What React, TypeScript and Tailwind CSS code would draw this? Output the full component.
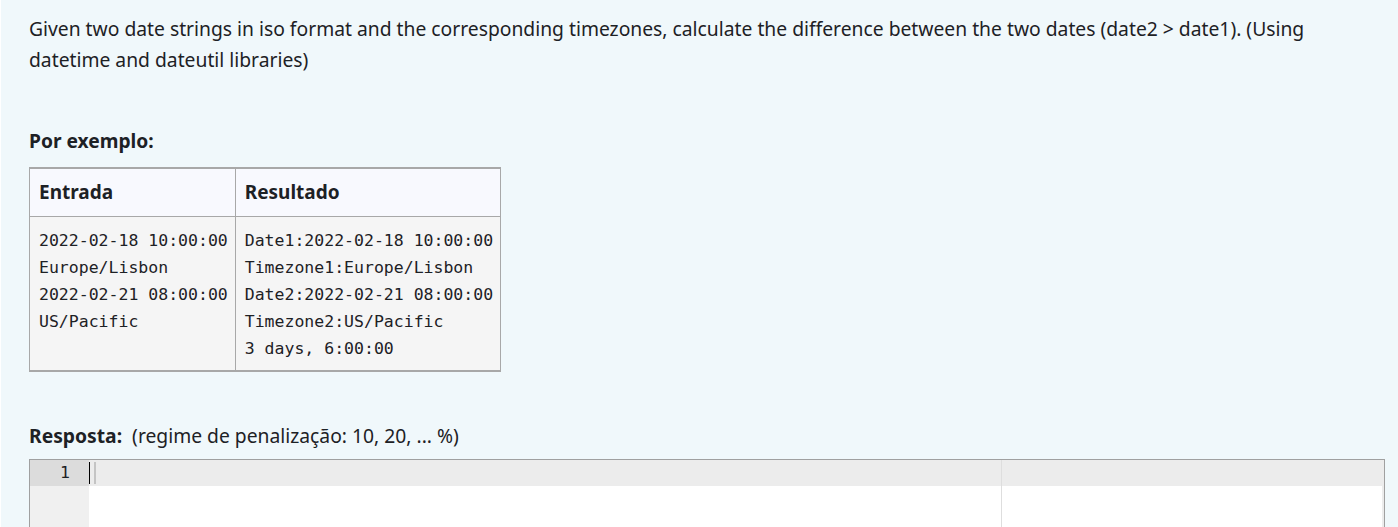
import React from "react";

const inputLines = [
    "2022-02-18 10:00:00",
    "Europe/Lisbon",
    "2022-02-21 08:00:00",
    "US/Pacific",
];

const resultLines = [
    "Date1:2022-02-18 10:00:00",
    "Timezone1:Europe/Lisbon",
    "Date2:2022-02-21 08:00:00",
    "Timezone2:US/Pacific",
    "3 days, 6:00:00",
];

const sans = "font-['Segoe_UI','Noto_Sans',sans-serif]";
const mono = "font-['DejaVu_Sans_Mono',monospace]";

const CodeCell: React.FC<{ lines: string[]; className?: string }> = ({ lines, className = "" }) => (
    <td className={`align-top pl-[9px] pr-[7px] pt-[10px] pb-[8px] ${className}`}>
        {lines.map((line) => (
            <div key={line} className={`${mono} text-[16.5px] leading-[27px] whitespace-pre`}>
                {line}
            </div>
        ))}
    </td>
);

export default function App() {
    return (
        <div className={`w-[1398px] h-[527px] overflow-hidden bg-[#f0f8fb] border-l border-white text-[#1d2125] ${sans}`}>
            <div className="pl-[28px] pr-[14px]">
                {/* Question text */}
                <p className="pt-[13px] text-[19.3px] leading-[31px] w-[1340px]">
                    Given two date strings in iso format and the corresponding timezones, calculate the difference between the two dates (date2 &gt; date1). (Using
                    <br />
                    datetime and dateutil libraries)
                </p>

                {/* Example table */}
                <h4 className="mt-[52px] font-bold text-[19.2px] leading-[27px]">Por exemplo:</h4>
                <table className="mt-[13px] border-collapse border-t-2 border-b-2 border-x border-[#a8a8a8]">
                    <thead>
                        <tr className="bg-[#f8f9fe]">
                            <th className="h-[48px] text-left font-bold text-[19px] pl-[9px] pr-[7px] border-r border-b border-[#a8a8a8]">
                                Entrada
                            </th>
                            <th className="text-left font-bold text-[19px] pl-[9px] pr-[7px] border-b border-[#a8a8a8]">
                                Resultado
                            </th>
                        </tr>
                    </thead>
                    <tbody>
                        <tr className="bg-[#f5f5f5]">
                            <CodeCell lines={inputLines} className="border-r border-[#a8a8a8]" />
                            <CodeCell lines={resultLines} />
                        </tr>
                    </tbody>
                </table>

                {/* Answer */}
                <div className="mt-[50px] flex items-baseline gap-[10px] text-[19.3px] leading-[27px]">
                    <span className="font-bold">Resposta:</span>
                    <span>(regime de penalização: 10, 20, ... %)</span>
                </div>

                <div className="mt-[10px] w-[1356px] h-[120px] border border-[#a0a0a0] flex bg-white">
                    {/* Gutter */}
                    <div className="w-[59px] bg-[#f0f0f0] flex flex-col">
                        <div className={`h-[26px] bg-[#dcdcdc] text-right pr-[19px] ${mono} text-[16.5px] leading-[26px]`}>1</div>
                    </div>
                    {/* Content */}
                    <div className="relative flex-1">
                        <div className="h-[26px] bg-[#ececec]" />
                        <div className="absolute left-0 top-[2px] w-px h-[22px] bg-black" />
                        <div className="absolute left-[5px] top-[2px] w-[2px] h-[22px] bg-[#c4c4c4]" />
                        <div className="absolute left-[912px] top-0 bottom-0 w-px bg-[#dedede]" />
                        <div className="absolute right-0 top-[26px] bottom-0 w-[2px] bg-[#ececec]" />
                    </div>
                </div>
            </div>
        </div>
    );
}
